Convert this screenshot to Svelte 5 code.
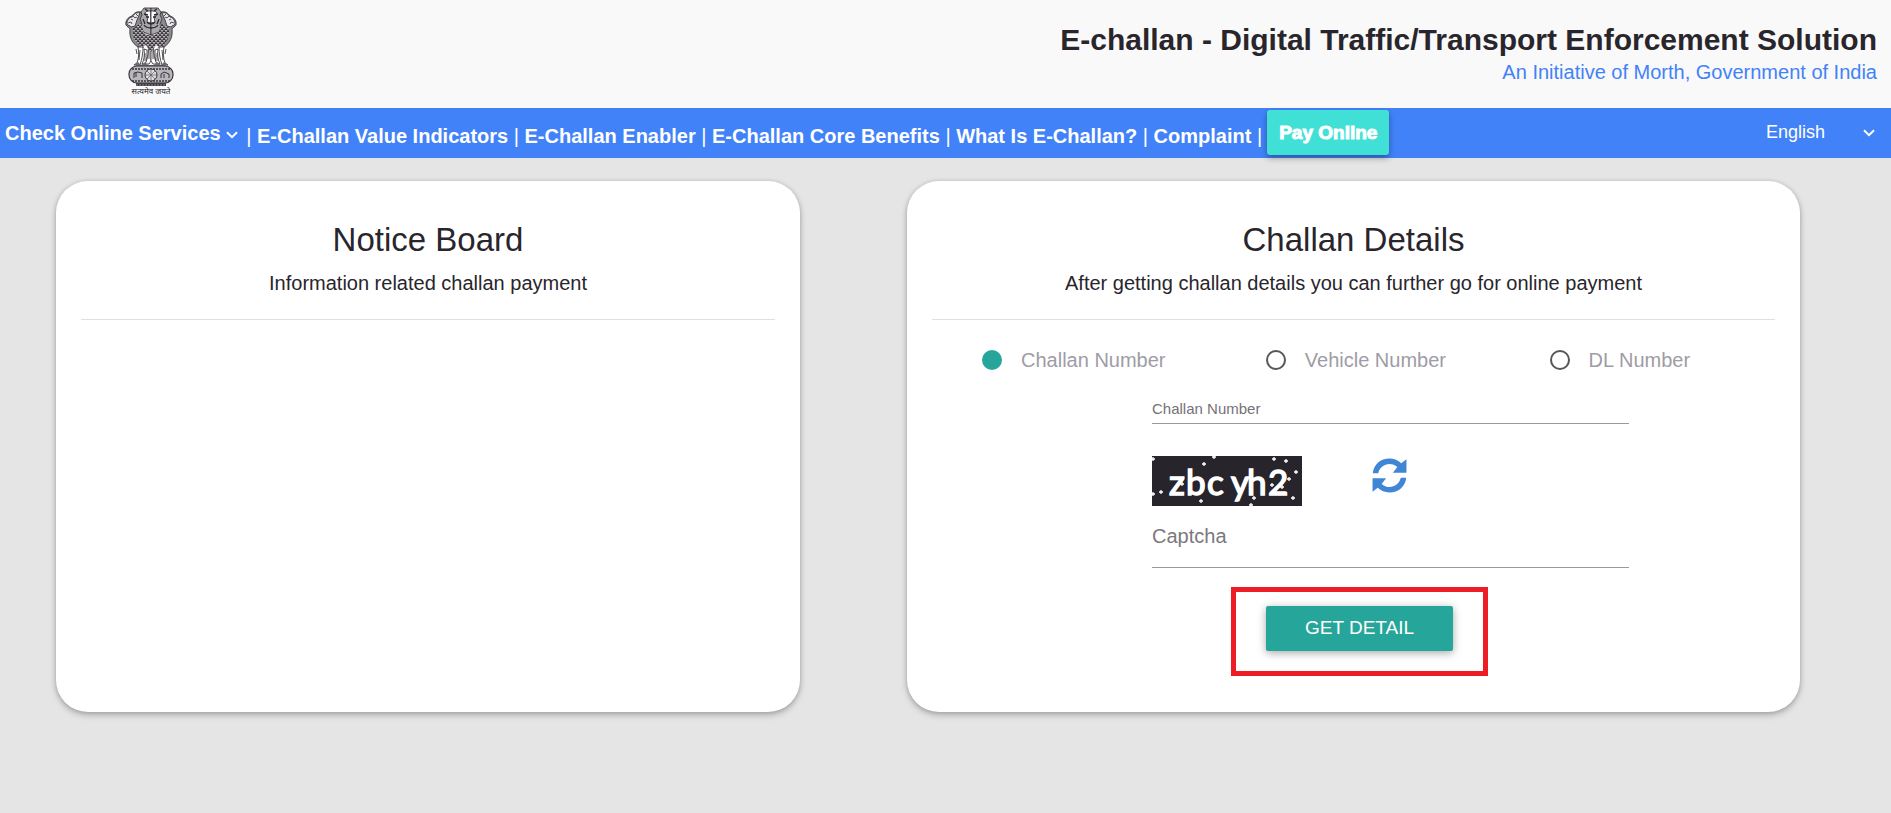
<script>
  const links = [
    'E-Challan Value Indicators',
    'E-Challan Enabler',
    'E-Challan Core Benefits',
    'What Is E-Challan?',
    'Complaint'
  ]

  const searchTypes = ['Challan Number', 'Vehicle Number', 'DL Number']

  // specks of captcha noise, in the 150x50 box
  const specks = [
    [1, 3], [52, 8], [62, 1], [122, 3], [134, 5], [144, 16], [9, 36], [1, 38],
    [49, 45], [30, 28], [99, 49], [141, 42], [102, 42], [120, 29], [130, 31], [137, 23]
  ]

  let searchBy = $state('Challan Number')
  let number = $state('')
  let captcha = $state('')
</script>

{#snippet chevron()}
  <svg class="chevron" viewBox="0 0 12 8" aria-hidden="true">
    <path d="M1 1.2 6 6.2 11 1.2" fill="none" stroke="#fff" stroke-width="2" />
  </svg>
{/snippet}

{#snippet lionHalf()}
  <!-- side lion -->
  <path d="M17 5c-4-1-7 1-9 4-4 1-7 5-6 9 1 2 3 2 4 4-1 8 2 14 8 18l5 1V8z" fill="#8d8a8f" />
  <path d="M16 6c-4-1-6 1-8 4-3 0-5 4-5 7 1 2 3 1 4 3l4-1 2-6z" fill="#e9e8ea" />
  <path d="M9 9c1 2 3 2 4 1M4 16l3-1 1 2M7 12l2 1M12 7l2 2" />
  <path d="M14 40c1 5 1 11-1 16l-3 2h6c2-6 3-12 3-18z" fill="#fff" />
  <path d="M20 42c1 6 0 11-2 15h4c1-5 1-10 1-14z" fill="#fff" />
  <!-- central lion -->
  <path d="M27 1h-7l-3 4 1 3-2 4 2 5-2 5 3 3 8 3z" fill="#aaa7ac" />
  <path d="M27 4c-3 0-5 0-6 2l1 3 2 1-1 5 4 1z" fill="#fff" />
  <path d="M20 7l4 1M22 10h3M23 15c1 2 2 2 4 2M20 18c2 3 4 3 7 3M19 12l2 5M21 2l3 2" stroke-width="1.3" />
  <path d="M24 36c1 8 0 14-2 19l-1 2h4l2-3V36z" fill="#fff" />
  <path d="M25 40v12M16 43l-1 10M21 46v8M12 42l1 5" />
{/snippet}

<div class="page">
  <header>
    <svg class="emblem" viewBox="0 0 54 90" role="img" aria-label="State Emblem of India">
      <defs>
        <pattern id="mane" width="4" height="4" patternUnits="userSpaceOnUse">
          <path d="M0 0q2 3 4 0M-2 2q2 3 4 0M2 2q2 3 4 0" fill="none" stroke="#242026" stroke-width="1" />
        </pattern>
        <g id="half" fill="none" stroke="#2b272d" stroke-width=".8">{@render lionHalf()}</g>
      </defs>
      <use href="#half" />
      <use href="#half" transform="matrix(-1 0 0 1 54 0)" />
      <path d="M9 21l8-5 3 10q7 5 14 0l3-10 8 5c1 9-2 15-8 19l-5-2-5 7-5-7-5 2C11 36 8 30 9 21z" fill="#b5b2b7" />
      <path d="M9 21l8-5 3 10q7 5 14 0l3-10 8 5c1 9-2 15-8 19l-5-2-5 7-5-7-5 2C11 36 8 30 9 21z" fill="url(#mane)" />
      <path d="M11 57l3-2 3 3 4-3 3 3h6l3-3 4 3 3-3 3 2-2 3H13z" fill="#706c72" />
      <rect x="5" y="59" width="44" height="17" rx="8" fill="#b9b6bb" stroke="#39353b" stroke-width="1.2" />
      <path d="M8 62h38M8 74h38" stroke="#39353b" stroke-width="1.5" stroke-dasharray="2 1" />
      <path d="M10 71v-5l4-1 4 1v5M12 66v4M37 71v-4l3-2 5 2v4M40 67v4" fill="none" stroke="#353138" />
      <circle cx="27" cy="68" r="6" fill="#ddd" stroke="#353138" />
      <path d="M27 62v12M21 68h12M23 64l8 8M31 64l-8 8" stroke="#5d5960" stroke-width=".7" />
      <path d="M12 76h30v3H12z" fill="#413d43" />
      <path d="M12 78h30" stroke="#aaa" stroke-width=".7" stroke-dasharray="2 1" />
      <text x="27" y="87" text-anchor="middle">सत्यमेव जयते</text>
    </svg>
    <div class="brand">
      <h1>E-challan - Digital Traffic/Transport Enforcement Solution</h1>
      <p>An Initiative of Morth, Government of India</p>
    </div>
  </header>

  <nav>
    <button class="services">Check Online Services {@render chevron()}</button>
    <div class="links">
      <span>|</span>
      {#each links as link}
        <a href="#top">{link}</a> <span>|</span>{' '}
      {/each}
    </div>
    <a class="pay" href="#pay">Pay Online</a>
    <div class="language">
      <select aria-label="Language">
        <option>English</option>
        <option>Hindi</option>
      </select>
      {@render chevron()}
    </div>
  </nav>

  <main>
    <section class="card">
      <h2>Notice Board</h2>
      <p class="lead">Information related challan payment</p>
      <hr />
    </section>

    <section class="card">
      <h2>Challan Details</h2>
      <p class="lead">After getting challan details you can further go for online payment</p>
      <hr />
      <div class="types" role="radiogroup" aria-label="Search by">
        {#each searchTypes as type}
          <label>
            <input type="radio" name="type" value={type} bind:group={searchBy} />
            {type}
          </label>
        {/each}
      </div>

      <form onsubmit={(e) => e.preventDefault()}>
        <label class="small" for="number">{searchBy}</label>
        <input class="number" id="number" type="text" bind:value={number} />

        <div class="captcha">
          <svg class="code" viewBox="0 0 150 50" role="img" aria-label="Captcha image">
            <rect width="150" height="50" fill="#28242b" />
            <text x="17 34 55 79 95 116" y="39">zbcyh2</text>
            {#each specks as [x, y]}
              <path d="M{x - 2} {y}h4M{x} {y - 2}v4" stroke="#fff" stroke-width="1.3" />
            {/each}
          </svg>
          <button class="refresh" type="button" aria-label="Refresh captcha">
            <svg viewBox="0 0 512 512" aria-hidden="true">
              <path
                fill="#3f86d6"
                d="M370.7 133.3C339.5 104 298.9 88 255.8 88c-77.5.1-144.3 53.2-162.8 126.9-1.3 5.4-6.1 9.1-11.7 9.1H12C24 95 125 8 256 8c66.4 0 126.8 26.1 171.3 68.7L504 18v198H305zM8 296h199l-65.8 82.8c31.3 29.3 71.8 45.3 114.9 45.3 77.4-.1 144.3-53.1 162.8-126.8 1.3-5.4 6.1-9.1 11.7-9.1H500C488 417 387 504 256 504c-66.4 0-126.8-26.1-171.3-68.7L8 494z"
              />
            </svg>
          </button>
        </div>

        <input type="text" placeholder="Captcha" aria-label="Captcha" bind:value={captcha} />

        <div class="highlight">
          <button class="submit">GET DETAIL</button>
        </div>
      </form>
    </section>
  </main>
</div>

<style>
  :global(body) {
    background: #e5e5e5;
  }

  .page {
    min-height: 100vh;
    font-family: 'Liberation Sans', Arial, sans-serif;
    font-size: 20px;
    line-height: 30px;
    color: #29252c;
  }

  .page * {
    box-sizing: border-box;
  }

  button,
  input,
  select {
    font: inherit;
  }

  button {
    border: 0;
    cursor: pointer;
  }

  header {
    display: flex;
    justify-content: space-between;
    align-items: flex-start;
    min-height: 108px;
    padding: 7px 14px 0 124px;
    background: #f9f9f9;
  }

  .emblem {
    width: 54px;
    height: 90px;
    overflow: visible;
  }

  .emblem text {
    font-family: 'Noto Sans Devanagari', 'Noto Sans', sans-serif;
    font-size: 8px;
    fill: #29252c;
  }

  .brand {
    padding-top: 15px;
    text-align: right;
  }

  h1 {
    margin: 0;
    font-size: 30px;
    line-height: 36px;
  }

  .brand p {
    margin: 0;
    line-height: 28px;
    color: #4282f8;
  }

  nav {
    display: flex;
    align-items: center;
    min-height: 50px;
    padding: 0 16px 0 5px;
    background: #4282f8;
    color: #fff;
    font-weight: bold;
    white-space: nowrap;
  }

  .services {
    padding: 0 8px 0 0;
    background: none;
    color: #fff;
  }

  .chevron {
    width: 12px;
    height: 8px;
    vertical-align: middle;
  }

  .links {
    padding-top: 6px;
    margin-right: 5px;
  }

  .links span {
    font-weight: normal;
  }

  nav a {
    color: #fff;
    text-decoration: none;
  }

  .pay {
    height: 45px;
    padding: 0 12px;
    margin-bottom: 2px;
    border-radius: 3px;
    background: #41e0d7;
    box-shadow: 0 3px 6px rgba(0, 0, 0, 0.35);
    font-size: 19px;
    line-height: 45px;
    -webkit-text-stroke: 1px #fff;
  }

  .language {
    display: flex;
    align-items: center;
    width: 109px;
    margin-left: auto;
    font-size: 18px;
    font-weight: normal;
  }

  select {
    flex: 1;
    padding-bottom: 3px;
    appearance: none;
    border: 0;
    background: none;
    color: #fff;
  }

  option {
    color: #29252c;
  }

  main {
    display: grid;
    grid-template-columns: 744fr 893fr;
    gap: 107px;
    padding: 23px 91px 60px 56px;
  }

  .card {
    min-height: 531px;
    padding: 39px 25px 35px;
    border-radius: 32px;
    background: #fff;
    box-shadow: 0 3px 6px rgba(0, 0, 0, 0.25), 0 0 4px rgba(0, 0, 0, 0.12);
    text-align: center;
  }

  h2 {
    margin: 0;
    font-size: 33px;
    font-weight: normal;
    line-height: 40px;
  }

  .lead {
    margin: 8px 0 21px;
  }

  hr {
    height: 1px;
    margin: 0;
    border: 0;
    background: #e0e0e0;
  }

  .types {
    display: grid;
    grid-template-columns: repeat(3, 1fr);
    width: 101%;
    padding-top: 25px;
    color: #9e9ca6;
  }

  .types label {
    display: flex;
    align-items: center;
    gap: 19px;
    padding-left: 50px;
  }

  .types input {
    appearance: none;
    width: 20px;
    height: 20px;
    margin: 0;
    border: 2px solid #5a5558;
    border-radius: 50%;
  }

  .types input:checked {
    border-color: #26a69a;
    background: #26a69a;
  }

  form {
    width: 56.6%;
    margin: 24px 0 0 26.1%;
    text-align: left;
  }

  .small {
    display: block;
    font-size: 15px;
    line-height: 20px;
    color: #757278;
  }

  input[type='text'] {
    display: block;
    width: 100%;
    height: 62px;
    padding: 0 0 1px;
    border: 0;
    border-bottom: 1px solid #9c99a6;
    outline: 0;
    background: none;
    color: #29252c;
  }

  input[type='text'].number {
    height: 26px;
    margin-top: -21px;
    padding-top: 20px;
  }

  input::placeholder {
    color: #7b787d;
    opacity: 1;
  }

  .captcha {
    display: flex;
    align-items: flex-start;
    gap: 70px;
    padding-top: 32px;
  }

  .code {
    width: 150px;
    height: 50px;
  }

  .code text {
    font-family: Lato, sans-serif;
    font-size: 35px;
    fill: #fff;
    stroke: #fff;
    stroke-width: 1.5px;
  }

  .refresh {
    padding: 2px 0 0;
    background: none;
  }

  .refresh svg {
    display: block;
    width: 35px;
    height: 35px;
  }

  .highlight {
    display: flex;
    justify-content: center;
    width: 257px;
    padding: 14px 0 20px;
    margin: 19px 0 0 79px;
    border: 5px solid #ee1c24;
  }

  .submit {
    width: 187px;
    height: 45px;
    padding-bottom: 3px;
    border-radius: 2px;
    background: #26a69a;
    box-shadow: 0 2px 8px rgba(0, 0, 0, 0.35);
    color: #fff;
    font-size: 19px;
  }
</style>
